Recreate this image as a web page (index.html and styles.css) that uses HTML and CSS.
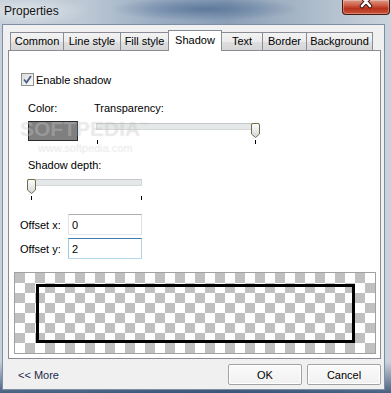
FILE: index.html
```html
<!DOCTYPE html>
<html lang="en">
<head>
    <meta charset="UTF-8">
    <meta name="viewport" content="width=device-width, initial-scale=1.0">
    <title>Properties</title>
    <link rel="stylesheet" href="styles.css">
</head>
<body>
    <div class="titlebar">
        <span class="title">Properties</span>
        <div class="close-btn">
            <svg width="48" height="15" viewBox="0 0 48 15">
                <path d="M20 -3 L28 6 M28 -3 L20 6" stroke="#3a0f08" stroke-width="4.5" stroke-linecap="round"/>
                <path d="M20 -3 L28 6 M28 -3 L20 6" stroke="#fff" stroke-width="2.6" stroke-linecap="round"/>
            </svg>
        </div>
    </div>

    <div class="client">
        <div class="tabs">
            <div class="tab tab-common">Common</div>
            <div class="tab tab-line">Line style</div>
            <div class="tab tab-fill">Fill style</div>
            <div class="tab tab-shadow active">Shadow</div>
            <div class="tab tab-text">Text</div>
            <div class="tab tab-border">Border</div>
            <div class="tab tab-bg">Background</div>
        </div>

        <div class="panel">
            <label class="check-row">
                <span class="checkbox">
                    <svg width="11" height="11" viewBox="0 0 11 11">
                        <path d="M2 5.5 L4.5 8.5 L9 2" fill="none" stroke="#4a5d86" stroke-width="1.8"/>
                    </svg>
                </span>
                Enable shadow
            </label>

            <div class="color-row">
                <div class="col-color">
                    <div class="lbl">Color:</div>
                    <div class="swatch"></div>
                </div>
                <div class="col-transp">
                    <div class="lbl">Transparency:</div>
                    <div class="slider slider-transp">
                        <div class="track"></div>
                        <svg class="thumb" style="left: 155px" width="9" height="15" viewBox="0 0 9 15">
                            <defs>
                                <linearGradient id="tg1" x1="0" y1="0" x2="0" y2="1">
                                    <stop offset="0" stop-color="#ffffff"/>
                                    <stop offset="1" stop-color="#d4d4d4"/>
                                </linearGradient>
                            </defs>
                            <path d="M0.5 2 Q0.5 0.5 2 0.5 H7 Q8.5 0.5 8.5 2 V11 L4.5 14.5 L0.5 11 Z" fill="url(#tg1)" stroke="#6f6f45"/>
                        </svg>
                        <span class="tick tick-start"></span>
                        <span class="tick tick-end"></span>
                    </div>
                </div>
            </div>

            <div class="lbl depth-lbl">Shadow depth:</div>
            <div class="slider slider-depth">
                <div class="track"></div>
                <svg class="thumb" style="left: 0px" width="9" height="15" viewBox="0 0 9 15">
                    <defs>
                        <linearGradient id="tg2" x1="0" y1="0" x2="0" y2="1">
                            <stop offset="0" stop-color="#ffffff"/>
                            <stop offset="1" stop-color="#d4d4d4"/>
                        </linearGradient>
                    </defs>
                    <path d="M0.5 2 Q0.5 0.5 2 0.5 H7 Q8.5 0.5 8.5 2 V11 L4.5 14.5 L0.5 11 Z" fill="url(#tg2)" stroke="#6f6f45"/>
                </svg>
                <span class="tick tick-start"></span>
                <span class="tick tick-end"></span>
            </div>

            <div class="offset-row first">
                <span class="offset-lbl">Offset x:</span>
                <input class="offset" type="text" value="0">
            </div>
            <div class="offset-row">
                <span class="offset-lbl">Offset y:</span>
                <input class="offset focused" type="text" value="2">
            </div>

            <div class="preview">
                <div class="shape"></div>
            </div>

            <div class="watermark">
                <span class="wm-big">SOFTPEDIA<sup>™</sup></span>
                <span class="wm-small">www.softpedia.com</span>
            </div>
        </div>

        <div class="footer">
            <span class="more">&lt;&lt; More</span>
            <button class="btn">OK</button>
            <button class="btn">Cancel</button>
        </div>
    </div>
</body>
</html>
```

FILE: styles.css
```css
* {
    box-sizing: border-box;
}

body {
    margin: 0;
    width: 391px;
    height: 393px;
    overflow: hidden;
    font-family: "Liberation Sans", Arial, sans-serif;
    font-size: 11px;
    color: #000;
    background:
        linear-gradient(to bottom, rgba(255,255,255,0) 92%, rgba(28,58,98,0.75) 100%),
        linear-gradient(to right, #c6d0da 0%, #bcc8d4 22%, #9aadc2 40%, #8a9fb7 58%, #a9b8c8 78%, #cbd4dd 100%);
}

.titlebar {
    height: 24px;
    display: flex;
    justify-content: space-between;
    align-items: flex-start;
    background:
        radial-gradient(ellipse 95px 12px at 205px 9px, rgba(60,92,135,0.6), rgba(60,92,135,0) 100%),
        radial-gradient(ellipse 60px 14px at 30px 11px, rgba(255,255,255,0.45), rgba(255,255,255,0) 100%);
}

.title {
    margin: 4px 0 0 4px;
    font-size: 12px;
    line-height: 14px;
    color: #141414;
}

.close-btn {
    width: 48px;
    height: 15px;
    margin-right: 1px;
    border: 1px solid #4d1810;
    border-top: none;
    border-radius: 0 0 4px 4px;
    background: linear-gradient(#dc9a88, #cc5a42 40%, #b8321c 60%, #c8553a);
    box-shadow: inset 0 0 0 1px rgba(255,255,255,0.3);
    overflow: hidden;
}

.close-btn svg {
    display: block;
    margin-left: -1px;
}

.client {
    margin-left: 2px;
    width: 383px;
    height: 366px;
    border: 1px solid #7e8fa4;
    background-color: #f0f0f0;
}

/* tabs */
.tabs {
    display: flex;
    align-items: flex-end;
    height: 20px;
    margin: 5px 0 0 7px;
    position: relative;
    z-index: 1;
}

.tab {
    height: 18px;
    line-height: 17px;
    text-align: center;
    border: 1px solid #898c95;
    border-bottom: none;
    background: linear-gradient(#f3f3f3, #ebebeb 50%, #dedede 51%, #d6d6d6);
    margin-left: -1px;
    white-space: nowrap;
}

.tab:first-child {
    margin-left: 0;
}

.tab.active {
    height: 21px;
    line-height: 19px;
    margin-bottom: -1px;
    background: #fff;
}

.tab-common { width: 54px; }
.tab-line { width: 58px; }
.tab-fill { width: 49px; }
.tab-shadow { width: 54px; }
.tab-text { width: 42px; }
.tab-border { width: 45px; }
.tab-bg { width: 67px; }

.panel {
    position: relative;
    margin-left: 5px;
    width: 373px;
    height: 309px;
    border: 1px solid #898c95;
    background-color: #fff;
}

.check-row {
    display: flex;
    align-items: center;
    gap: 2px;
    height: 13px;
    margin: 22px 0 0 12px;
}

.checkbox {
    width: 13px;
    height: 13px;
    border: 1px solid #8e8f8f;
    background: linear-gradient(135deg, #dcdcdc, #fbfbfb);
    display: flex;
    align-items: center;
    justify-content: center;
}

.checkbox svg {
    display: block;
}

.lbl {
    line-height: 15px;
    height: 15px;
}

.color-row {
    display: flex;
    margin-top: 15px;
}

.col-color {
    margin-left: 19px;
    width: 66px;
}

.swatch {
    margin-top: 5px;
    width: 50px;
    height: 20px;
    border: 1px solid #2b2b2b;
    background-color: #7f7f7f;
}

/* sliders */
.slider {
    position: relative;
    height: 22px;
}

.slider-transp {
    margin: 7px 0 0 2px;
    width: 163px;
}

.slider-depth {
    margin: 6px 0 0 18px;
    width: 115px;
}

.track {
    margin-top: 4px;
    height: 7px;
    background-color: #e5e8e8;
    border: 1px solid #d5d8d8;
    border-top-color: #c4c7c7;
}

.thumb {
    position: absolute;
    top: 0;
    display: block;
}

.tick {
    position: absolute;
    top: 17px;
    width: 1px;
    height: 4px;
    background-color: #000;
}

.slider-transp .tick-start { left: 1px; }
.slider-transp .tick-end { left: 159px; }
.slider-depth .tick-start { left: 4px; }
.slider-depth .tick-end { left: 114px; }

.depth-lbl {
    margin: 13px 0 0 19px;
}

/* offsets */
.offset-row {
    display: flex;
    align-items: center;
    margin-top: 3px;
    height: 21px;
}

.offset-row.first {
    margin-top: 13px;
}

.offset-lbl {
    width: 59px;
    padding-left: 11px;
}

.offset {
    width: 74px;
    height: 21px;
    padding: 0 0 0 3px;
    margin: 0;
    font-family: inherit;
    font-size: 11px;
    color: #000;
    background: #fff;
    border: 1px solid;
    border-color: #abadb3 #dbdfe6 #e3e9ef #e2e3ea;
    outline: none;
}

.offset.focused {
    border-color: #3d7bad #b5cfe7 #b7d9ed #a4c9e3;
}

/* preview */
.preview {
    margin: 13px 0 0 5px;
    width: 362px;
    height: 82px;
    border: 1px solid #a0a0a0;
    padding: 11px 0 0 21px;
    background-color: #fff;
    background-image: conic-gradient(#c0c0c0 25%, #fff 0 50%, #c0c0c0 0 75%, #fff 0);
    background-size: 20px 20px;
    background-position: 10px 0;
}

.shape {
    width: 319px;
    height: 59px;
    border: 3px solid #000;
}

.watermark {
    position: absolute;
    left: 11px;
    top: 63px;
    pointer-events: none;
    color: rgba(255,255,255,0.3);
    text-shadow: 0 0 1px rgba(0,0,0,0.12);
}

.wm-big {
    display: block;
    font-size: 21px;
    font-weight: bold;
    line-height: 24px;
}

.wm-big sup {
    font-size: 8px;
}

.wm-small {
    display: block;
    margin-left: 18px;
    font-size: 11px;
    line-height: 14px;
}

/* footer */
.footer {
    display: flex;
    align-items: center;
    gap: 5px;
    margin: 5px 3px 0 0;
}

.more {
    flex: 1;
    margin-left: 15px;
    color: #1e2a4a;
}

.btn {
    width: 74px;
    height: 21px;
    padding: 0;
    font-family: inherit;
    font-size: 11px;
    color: #000;
    border: 1px solid #a3a3a3;
    border-radius: 2px;
    background: linear-gradient(#fbfbfb, #f0f0f0);
    box-shadow: inset 0 0 0 1px #fff;
}
```
